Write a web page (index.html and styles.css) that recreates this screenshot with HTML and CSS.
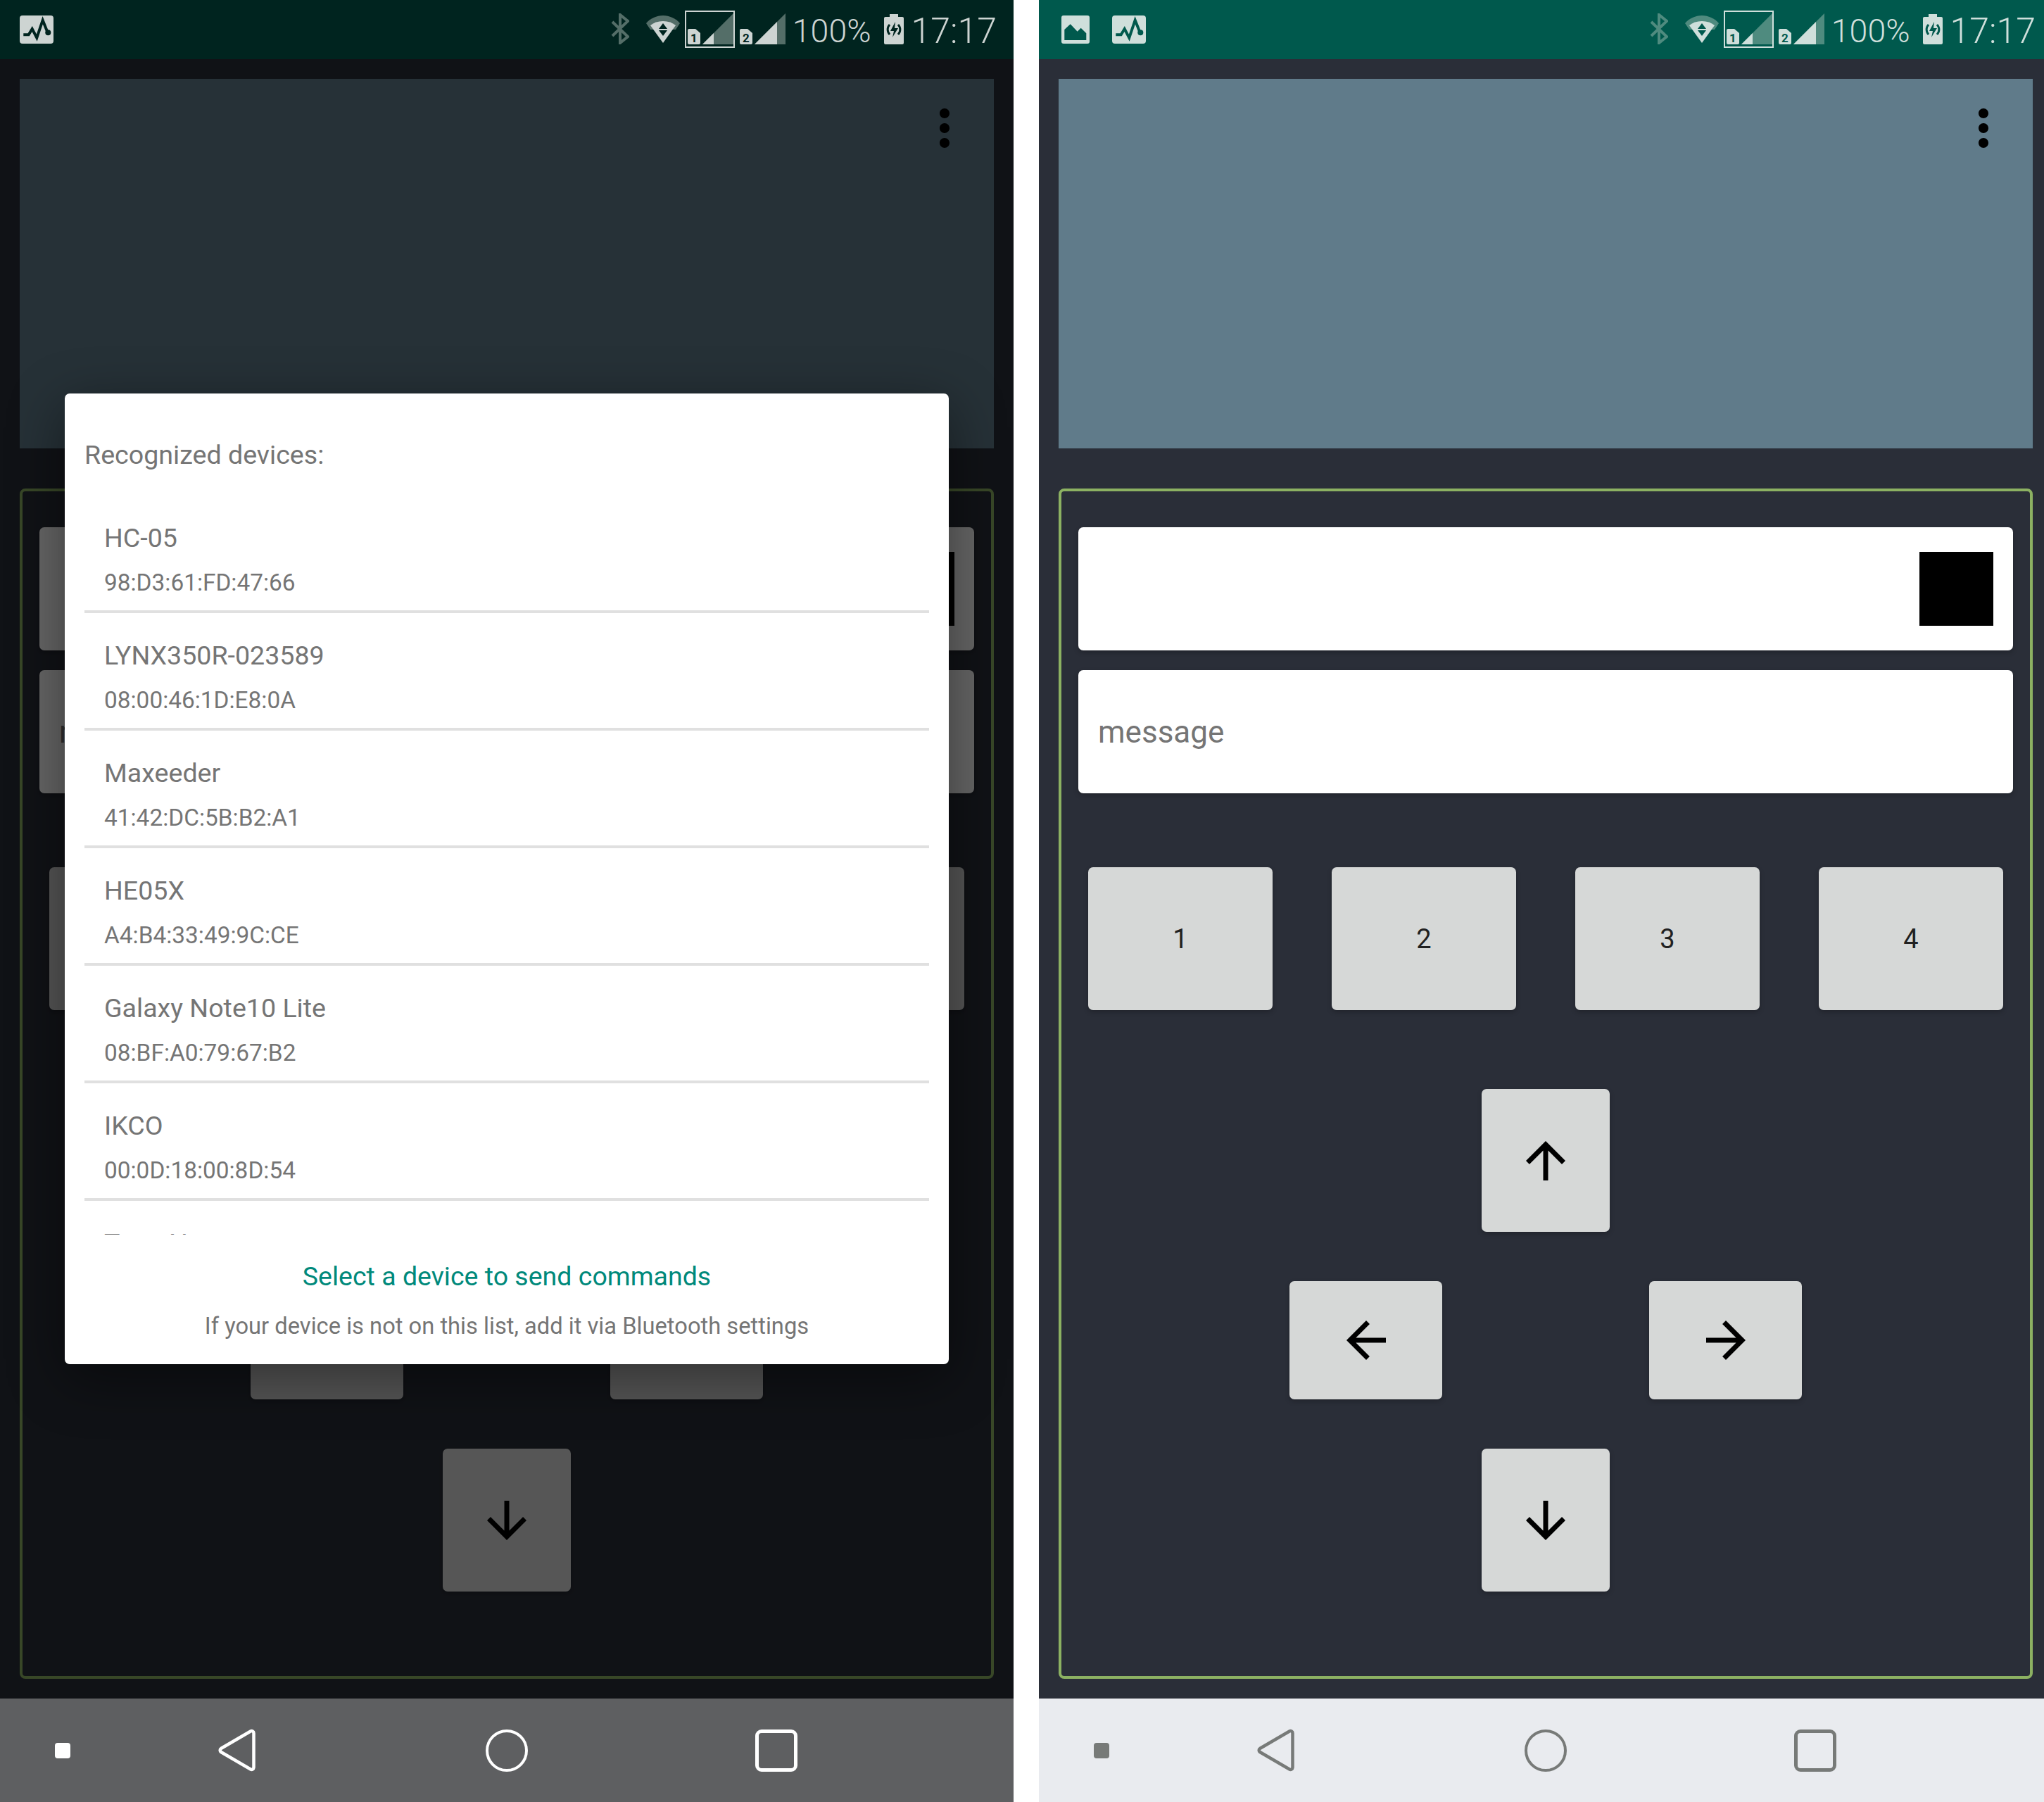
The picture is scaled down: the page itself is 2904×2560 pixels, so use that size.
FILE: index.html
```html
<!DOCTYPE html>
<html lang="en">
<head>
  <meta charset="UTF-8">
  <title>Bluetooth Remote</title>
  <link rel="stylesheet" href="styles.css">
</head>
<body>

<div class="phone phone-dim">
  <div class="status-bar">
    <svg class="note-icon" viewBox="0 0 48 40"><rect class="icon-fill" width="48" height="40" rx="4"/><path class="icon-cut" d="M5.300 27.300h7.400l5-8.300 6.600 12.700 8.400-25 6.600 16.600"/><circle class="icon-dot" cx="40.300" cy="24.300" r="4"/></svg>
    <div class="status-right">
      <svg class="bt-icon" viewBox="0 0 26 44"><path class="icon-dim-line" d="M2 12l22 21-11 9V2l11 9-22 21"/></svg>
      <svg class="wifi-icon" viewBox="0 0 48 39"><path class="icon-dim" d="M0 11C6 4 15 0 24 0s18 4 24 11l-6 9H6z"/><path class="icon-fill" d="M6 14C11 10 17 8 24 8s13 2 18 6L24 39z"/><path class="icon-cut-fill" d="M24 11l6 8H18zM18 21h12l-6 8z"/></svg>
      <div class="sim-box">
        <svg class="sim-icon" viewBox="0 0 18 22"><path class="icon-fill" d="M2 0h9l7 6v14a2 2 0 0 1-2 2H2a2 2 0 0 1-2-2V2a2 2 0 0 1 2-2z"/><text class="sim-num" x="9" y="19">1</text></svg>
        <svg class="bars-icon" viewBox="0 0 44 44"><path class="icon-dim" d="M44 0v44H0z"/><path class="icon-fill" d="M16 28v16H0z"/></svg>
      </div>
      <svg class="sim-icon sim-two" viewBox="0 0 18 22"><path class="icon-fill" d="M2 0h9l7 6v14a2 2 0 0 1-2 2H2a2 2 0 0 1-2-2V2a2 2 0 0 1 2-2z"/><text class="sim-num" x="9" y="19">2</text></svg>
      <svg class="bars-icon bars-two" viewBox="0 0 44 44"><path class="icon-dim" d="M44 0v44H0z"/><path class="icon-fill" d="M32 12v32H0z"/></svg>
      <span class="battery-text">100%</span>
      <svg class="battery-icon" viewBox="0 0 28 43"><path class="icon-fill" d="M8 0h12v4h6a2 2 0 0 1 2 2v35a2 2 0 0 1-2 2H2a2 2 0 0 1-2-2V6a2 2 0 0 1 2-2h6z"/><path class="icon-cut-fill" d="M16 11l-7 13h5l-2 9 8-13h-5z"/><path class="icon-cut" d="M8 15a10 10 0 0 0 0 14M20 15a10 10 0 0 1 0 14"/></svg>
      <span class="clock">17:17</span>
    </div>
  </div>

  <div class="content">
    <div class="panel">
      <svg class="more-icon" viewBox="0 0 24 24"><path d="M12 8c1.1 0 2-.9 2-2s-.9-2-2-2-2 .9-2 2 .9 2 2 2zm0 2c-1.1 0-2 .9-2 2s.9 2 2 2 2-.9 2-2-.9-2-2-2zm0 6c-1.1 0-2 .9-2 2s.9 2 2 2 2-.9 2-2-.9-2-2-2z"/></svg>
    </div>
    <div class="frame">
      <div class="field field-status"><div class="status-square"></div></div>
      <div class="field field-message">message</div>
      <div class="num-row">
        <div class="btn btn-num">1</div>
        <div class="btn btn-num">2</div>
        <div class="btn btn-num">3</div>
        <div class="btn btn-num">4</div>
      </div>
      <div class="arrow-row row-up">
        <div class="btn btn-vert"><svg class="arrow" viewBox="0 0 24 24"><path d="M4 12l1.41 1.41L11 7.83V20h2V7.83l5.58 5.59L20 12l-8-8-8 8z"/></svg></div>
      </div>
      <div class="arrow-row row-mid">
        <div class="btn btn-side"><svg class="arrow" viewBox="0 0 24 24"><path d="M20 11H7.83l5.59-5.59L12 4l-8 8 8 8 1.41-1.41L7.83 13H20v-2z"/></svg></div>
        <div class="btn btn-side"><svg class="arrow" viewBox="0 0 24 24"><path d="M12 4l-1.41 1.41L16.17 11H4v2h12.17l-5.58 5.59L12 20l8-8z"/></svg></div>
      </div>
      <div class="arrow-row row-down">
        <div class="btn btn-vert"><svg class="arrow" viewBox="0 0 24 24"><path d="M20 12l-1.41-1.41L13 16.17V4h-2v12.17l-5.58-5.59L4 12l8 8 8-8z"/></svg></div>
      </div>
    </div>

    <div class="scrim">
      <div class="dialog">
        <div class="dialog-title">Recognized devices:</div>
        <div class="device-list">
          <div class="device"><div class="device-name">HC-05</div><div class="device-mac">98:D3:61:FD:47:66</div></div>
          <div class="device"><div class="device-name">LYNX350R-023589</div><div class="device-mac">08:00:46:1D:E8:0A</div></div>
          <div class="device"><div class="device-name">Maxeeder</div><div class="device-mac">41:42:DC:5B:B2:A1</div></div>
          <div class="device"><div class="device-name">HE05X</div><div class="device-mac">A4:B4:33:49:9C:CE</div></div>
          <div class="device"><div class="device-name">Galaxy Note10 Lite</div><div class="device-mac">08:BF:A0:79:67:B2</div></div>
          <div class="device"><div class="device-name">IKCO</div><div class="device-mac">00:0D:18:00:8D:54</div></div>
          <div class="device"><div class="device-name">Tone Note</div></div>
        </div>
        <div class="dialog-hint">Select a device to send commands</div>
        <div class="dialog-note">If your device is not on this list, add it via Bluetooth settings</div>
      </div>
    </div>
  </div>

  <div class="nav-bar">
    <div class="nav-dot"></div>
    <svg class="nav-back" viewBox="0 0 54 61"><path d="M47 3.500a3 3 0 0 1 4.500 2.500v49a3 3 0 0 1-4.500 2.500L5 33a3 3 0 0 1 0-5z"/></svg>
    <div class="nav-home"></div>
    <div class="nav-recent"></div>
  </div>
</div>

<div class="phone">
  <div class="status-bar">
    <svg class="note-icon note-picture" viewBox="0 0 40 40"><rect class="icon-fill" width="40" height="40" rx="3"/><path class="icon-cut-fill" d="M4.300 20l8.400-7.700 10 10.400 5-5 7.600 7.600V35h-31z"/></svg>
    <svg class="note-icon" viewBox="0 0 48 40"><rect class="icon-fill" width="48" height="40" rx="4"/><path class="icon-cut" d="M5.300 27.300h7.400l5-8.300 6.600 12.700 8.400-25 6.600 16.600"/><circle class="icon-dot" cx="40.300" cy="24.300" r="4"/></svg>
    <div class="status-right">
      <svg class="bt-icon" viewBox="0 0 26 44"><path class="icon-dim-line" d="M2 12l22 21-11 9V2l11 9-22 21"/></svg>
      <svg class="wifi-icon" viewBox="0 0 48 39"><path class="icon-dim" d="M0 11C6 4 15 0 24 0s18 4 24 11l-6 9H6z"/><path class="icon-fill" d="M6 14C11 10 17 8 24 8s13 2 18 6L24 39z"/><path class="icon-cut-fill" d="M24 11l6 8H18zM18 21h12l-6 8z"/></svg>
      <div class="sim-box">
        <svg class="sim-icon" viewBox="0 0 18 22"><path class="icon-fill" d="M2 0h9l7 6v14a2 2 0 0 1-2 2H2a2 2 0 0 1-2-2V2a2 2 0 0 1 2-2z"/><text class="sim-num" x="9" y="19">1</text></svg>
        <svg class="bars-icon" viewBox="0 0 44 44"><path class="icon-dim" d="M44 0v44H0z"/><path class="icon-fill" d="M16 28v16H0z"/></svg>
      </div>
      <svg class="sim-icon sim-two" viewBox="0 0 18 22"><path class="icon-fill" d="M2 0h9l7 6v14a2 2 0 0 1-2 2H2a2 2 0 0 1-2-2V2a2 2 0 0 1 2-2z"/><text class="sim-num" x="9" y="19">2</text></svg>
      <svg class="bars-icon bars-two" viewBox="0 0 44 44"><path class="icon-dim" d="M44 0v44H0z"/><path class="icon-fill" d="M32 12v32H0z"/></svg>
      <span class="battery-text">100%</span>
      <svg class="battery-icon" viewBox="0 0 28 43"><path class="icon-fill" d="M8 0h12v4h6a2 2 0 0 1 2 2v35a2 2 0 0 1-2 2H2a2 2 0 0 1-2-2V6a2 2 0 0 1 2-2h6z"/><path class="icon-cut-fill" d="M16 11l-7 13h5l-2 9 8-13h-5z"/><path class="icon-cut" d="M8 15a10 10 0 0 0 0 14M20 15a10 10 0 0 1 0 14"/></svg>
      <span class="clock">17:17</span>
    </div>
  </div>

  <div class="content">
    <div class="panel">
      <svg class="more-icon" viewBox="0 0 24 24"><path d="M12 8c1.1 0 2-.9 2-2s-.9-2-2-2-2 .9-2 2 .9 2 2 2zm0 2c-1.1 0-2 .9-2 2s.9 2 2 2 2-.9 2-2-.9-2-2-2zm0 6c-1.1 0-2 .9-2 2s.9 2 2 2 2-.9 2-2-.9-2-2-2z"/></svg>
    </div>
    <div class="frame">
      <div class="field field-status"><div class="status-square"></div></div>
      <div class="field field-message">message</div>
      <div class="num-row">
        <div class="btn btn-num">1</div>
        <div class="btn btn-num">2</div>
        <div class="btn btn-num">3</div>
        <div class="btn btn-num">4</div>
      </div>
      <div class="arrow-row row-up">
        <div class="btn btn-vert"><svg class="arrow" viewBox="0 0 24 24"><path d="M4 12l1.41 1.41L11 7.83V20h2V7.83l5.58 5.59L20 12l-8-8-8 8z"/></svg></div>
      </div>
      <div class="arrow-row row-mid">
        <div class="btn btn-side"><svg class="arrow" viewBox="0 0 24 24"><path d="M20 11H7.83l5.59-5.59L12 4l-8 8 8 8 1.41-1.41L7.83 13H20v-2z"/></svg></div>
        <div class="btn btn-side"><svg class="arrow" viewBox="0 0 24 24"><path d="M12 4l-1.41 1.41L16.17 11H4v2h12.17l-5.58 5.59L12 20l8-8z"/></svg></div>
      </div>
      <div class="arrow-row row-down">
        <div class="btn btn-vert"><svg class="arrow" viewBox="0 0 24 24"><path d="M20 12l-1.41-1.41L13 16.17V4h-2v12.17l-5.58-5.59L4 12l8 8 8-8z"/></svg></div>
      </div>
    </div>
  </div>

  <div class="nav-bar">
    <div class="nav-dot"></div>
    <svg class="nav-back" viewBox="0 0 54 61"><path d="M47 3.500a3 3 0 0 1 4.500 2.500v49a3 3 0 0 1-4.500 2.500L5 33a3 3 0 0 1 0-5z"/></svg>
    <div class="nav-home"></div>
    <div class="nav-recent"></div>
  </div>
</div>

</body>
</html>
```

FILE: styles.css
```css
html, body {
  margin: 0;
  height: 2560px;
  overflow: hidden;
  background: #fff;
}

body {
  display: flex;
  gap: 36px;
  font-family: Roboto, sans-serif;
}

/* one phone screen */
.phone {
  --status-bg: #00594d;
  --status-fg: #cfdfdb;
  --status-dim: #4f8b7f;
  --nav-bg: #e9ebef;
  --nav-fg: #777a78;
  flex: 0 0 1440px;
  height: 2560px;
  display: flex;
  flex-direction: column;
}

.phone-dim {
  --status-bg: #00241f;
  --status-fg: #cdd4d2;
  --status-dim: #546e68;
  --nav-bg: #5e5f61;
  --nav-fg: #fff;
}

/* status bar */
.status-bar {
  flex: 0 0 84px;
  display: flex;
  align-items: flex-start;
  padding-left: 28px;
  background: var(--status-bg);
  color: var(--status-fg);
}

.note-icon {
  width: 48px;
  height: 40px;
  margin-top: 22px;
}

.note-picture {
  width: 40px;
  margin-left: 4px;
  margin-right: 32px;
}

.status-right {
  flex: 1;
  height: 84px;
  display: flex;
  justify-content: flex-end;
  align-items: flex-start;
  padding-right: 24px;
}

.icon-fill { fill: var(--status-fg); }
.icon-dim { fill: var(--status-dim); }
.icon-dim-line { fill: none; stroke: var(--status-dim); stroke-width: 4; }
.icon-cut { fill: none; stroke: var(--status-bg); stroke-width: 4; }
.icon-cut-fill, .icon-dot { fill: var(--status-bg); }

.battery-icon .icon-cut { stroke-width: 3; }

.bt-icon {
  width: 26px;
  height: 44px;
  margin: 19px 24px 0 0;
}

.wifi-icon {
  width: 48px;
  height: 39px;
  margin: 22px 7px 0 0;
}

.sim-box {
  display: flex;
  align-items: flex-end;
  gap: 3px;
  width: 71px;
  height: 53px;
  margin: 15px 7px 0 0;
  padding: 0 0 3px 2px;
  border: 2px solid var(--status-fg);
  box-sizing: border-box;
}

.sim-icon {
  flex: none;
  width: 18px;
  height: 22px;
}

.sim-two {
  margin: 41px 3px 0 0;
}

.sim-num {
  font-size: 17px;
  font-weight: 700;
  text-anchor: middle;
  fill: var(--status-bg);
}

.bars-icon {
  flex: none;
  width: 44px;
  height: 44px;
}

.bars-two {
  margin: 19px 10px 0 0;
}

.battery-text, .clock {
  margin-top: 2px;
  font-weight: 300;
  line-height: 84px;
  white-space: nowrap;
}

.battery-text { font-size: 46.5px; }
.clock { font-size: 50px; }

.battery-icon {
  width: 28px;
  height: 43px;
  margin: 20px 11px 0 18px;
}

/* main area */
.content {
  position: relative;
  flex: 1;
  padding: 28px;
  background: #2a2e38;
}

.panel {
  height: 525px;
  display: flex;
  justify-content: flex-end;
  align-items: flex-start;
  padding: 28px 28px 0 0;
  box-sizing: border-box;
  background: #607b8a;
}

.more-icon {
  width: 84px;
  height: 84px;
}

.frame {
  height: 1691px;
  margin-top: 57px;
  padding: 51px 24px 0;
  box-sizing: border-box;
  border: 4px solid #8cb162;
  border-radius: 8px;
}

.field {
  height: 175px;
  display: flex;
  align-items: center;
  background: #fff;
  border-radius: 7px;
  box-shadow: 0 3px 7px rgba(0,0,0,0.22);
}

.field-status {
  justify-content: flex-end;
  padding-right: 28px;
}

.status-square {
  width: 105px;
  height: 105px;
  background: #000;
}

.field-message {
  margin-top: 28px;
  padding-left: 28px;
  font-size: 44px;
  color: #757575;
}

.btn {
  display: flex;
  align-items: center;
  justify-content: center;
  background: #d6d8d7;
  border-radius: 7px;
  box-shadow: 0 3px 7px rgba(0,0,0,0.22);
}

.num-row {
  display: flex;
  justify-content: space-between;
  margin: 105px 14px 0;
}

.btn-num {
  width: 262px;
  height: 203px;
  font-size: 38px;
  color: #212121;
}

.arrow-row {
  display: flex;
  justify-content: center;
}

.row-up { margin-top: 112px; }
.row-mid { margin-top: 70px; gap: 294px; }
.row-down { margin-top: 70px; }

.btn-vert {
  width: 182px;
  height: 203px;
}

.btn-side {
  width: 217px;
  height: 168px;
}

.arrow {
  width: 84px;
  height: 84px;
}

/* device dialog over the dimmed screen */
.scrim {
  position: absolute;
  inset: 0;
  display: flex;
  align-items: center;
  justify-content: center;
  background: rgba(0,0,0,0.6);
}

.dialog {
  width: 1256px;
  height: 1379px;
  display: flex;
  flex-direction: column;
  background: #fff;
  border-radius: 7px;
  color: #757575;
  box-shadow: 0 20px 80px rgba(0,0,0,0.45);
}

.dialog-title {
  height: 145px;
  padding: 64px 0 0 28px;
  box-sizing: border-box;
  font-size: 37.6px;
  line-height: 46px;
}

.device-list {
  height: 1050px;
  margin: 0 28px;
  overflow: hidden;
}

.device {
  height: 167px;
  padding-left: 28px;
  box-sizing: border-box;
  border-bottom: 4px solid #e0e0e0;
}

.device-name {
  padding-top: 37px;
  font-size: 37.6px;
  line-height: 46px;
}

.device-mac {
  padding-top: 20px;
  font-size: 33.4px;
  line-height: 42px;
}

.dialog-hint {
  margin-top: 36px;
  font-size: 37.5px;
  line-height: 46px;
  text-align: center;
  color: #00897b;
}

.dialog-note {
  margin-top: 27px;
  font-size: 32.7px;
  line-height: 42px;
  text-align: center;
}

/* navigation bar */
.nav-bar {
  flex: 0 0 147px;
  display: flex;
  align-items: center;
  background: var(--nav-bg);
}

.nav-dot {
  width: 22px;
  height: 22px;
  margin-left: 78px;
  border-radius: 4px;
  background: var(--nav-fg);
}

.nav-back {
  width: 54px;
  height: 61px;
  margin-left: 209px;
  fill: none;
  stroke: var(--nav-fg);
  stroke-width: 4.5;
}

.nav-home {
  width: 60px;
  height: 60px;
  margin-left: 327px;
  box-sizing: border-box;
  border: 4.5px solid var(--nav-fg);
  border-radius: 50%;
}

.nav-recent {
  width: 60px;
  height: 60px;
  margin-left: 323px;
  box-sizing: border-box;
  border: 5px solid var(--nav-fg);
  border-radius: 9px;
}
```
